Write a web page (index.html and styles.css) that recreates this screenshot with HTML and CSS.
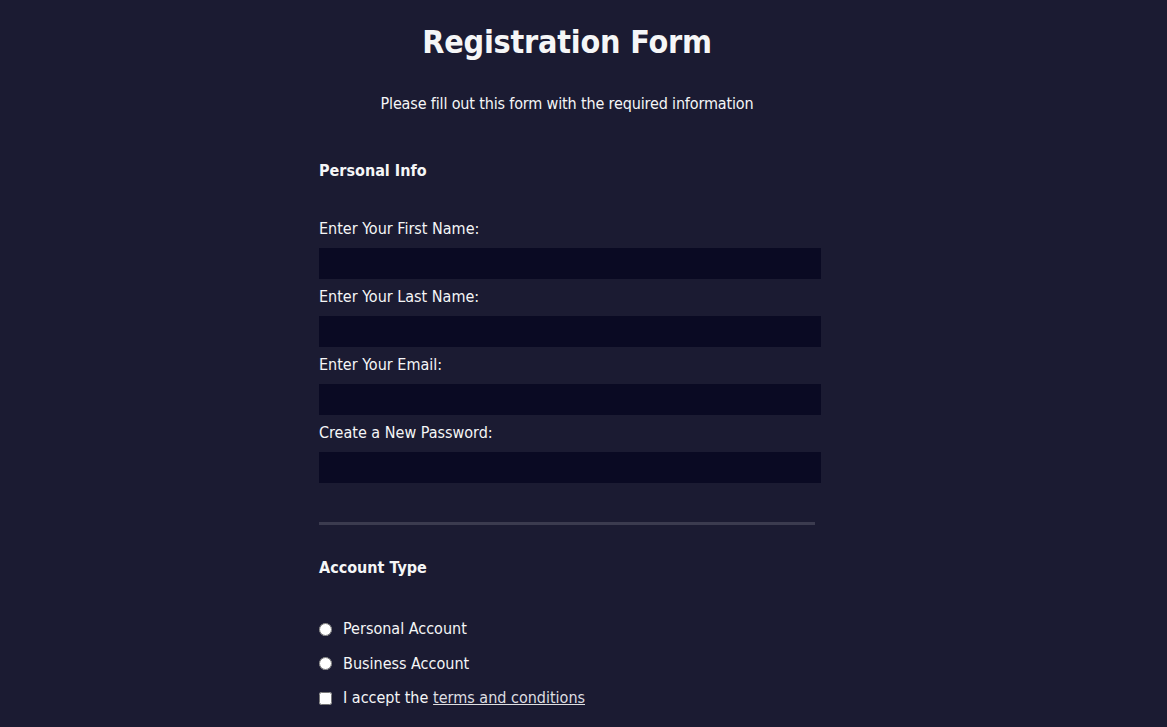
FILE: index.html
```html
<!DOCTYPE html>
<html lang="en">
<head>
<meta charset="utf-8">
<title>Registration Form</title>
<link rel="stylesheet" href="styles.css">
</head>
<body>
<div class="page">
  <h1 class="title">Registration Form</h1>
  <p class="intro">Please fill out this form with the required information</p>
  <form class="form">
    <div class="section section-personal">
      <div class="legend">Personal Info</div>
      <div class="fields">
        <label class="field">
          <span class="field-label">Enter Your First Name:</span>
          <input class="text-input" type="text">
        </label>
        <label class="field">
          <span class="field-label">Enter Your Last Name:</span>
          <input class="text-input" type="text">
        </label>
        <label class="field">
          <span class="field-label">Enter Your Email:</span>
          <input class="text-input" type="email">
        </label>
        <label class="field">
          <span class="field-label">Create a New Password:</span>
          <input class="text-input" type="password">
        </label>
      </div>
    </div>
    <div class="section section-account">
      <div class="legend">Account Type</div>
      <div class="options">
        <label class="option"><input class="choice" type="radio" name="account">Personal Account</label>
        <label class="option"><input class="choice" type="radio" name="account">Business Account</label>
        <label class="option"><input class="choice" type="checkbox">I accept the <a class="terms" href="#">terms and conditions</a></label>
      </div>
    </div>
  </form>
</div>
</body>
</html>
```
FILE: styles.css
```css
html, body {
  margin: 0;
  padding: 0;
  background: #1b1b32;
}

body {
  color: #f5f6f7;
  font-family: "DejaVu Sans Condensed", "DejaVu Sans", sans-serif;
  font-size: 16px;
  overflow: hidden;
}

.page {
  width: 1134px;
  display: flex;
  flex-direction: column;
  align-items: center;
}

.title {
  margin: 22px 0 0;
  font-size: 32px;
  line-height: 40px;
  font-weight: bold;
  text-align: center;
  letter-spacing: -0.2px;
}

.intro {
  margin: 32px 0 0;
  line-height: 20px;
  text-align: center;
  letter-spacing: -0.15px;
}

.form {
  width: 496px;
  margin-top: 47px;
  display: flex;
  flex-direction: column;
}

.section {
  display: flex;
  flex-direction: column;
}

.section-personal {
  padding-bottom: 39px;
  border-bottom: 3px solid #3b3b4f;
}

.section-account {
  padding-top: 33px;
}

.legend {
  font-weight: bold;
  line-height: 19px;
}

.fields {
  display: flex;
  flex-direction: column;
  gap: 8px;
  margin-top: 39px;
}

.field {
  display: flex;
  flex-direction: column;
  gap: 9px;
}

.field-label {
  line-height: 20px;
}

.text-input {
  box-sizing: border-box;
  width: calc(100% + 6px);
  height: 31px;
  margin: 0;
  padding: 1px 2px;
  background: #0a0a23;
  border: 1px solid #0a0a23;
  color: #ffffff;
}

.options {
  display: flex;
  flex-direction: column;
  gap: 14.5px;
  margin-top: 42px;
}

.option {
  display: flex;
  align-items: center;
  line-height: 20px;
}

.choice {
  width: 13px;
  height: 13px;
  margin: 0 11px 0 0;
  flex: none;
}

.terms {
  color: #dfdfe2;
  margin-left: 0.3em;
}
```
